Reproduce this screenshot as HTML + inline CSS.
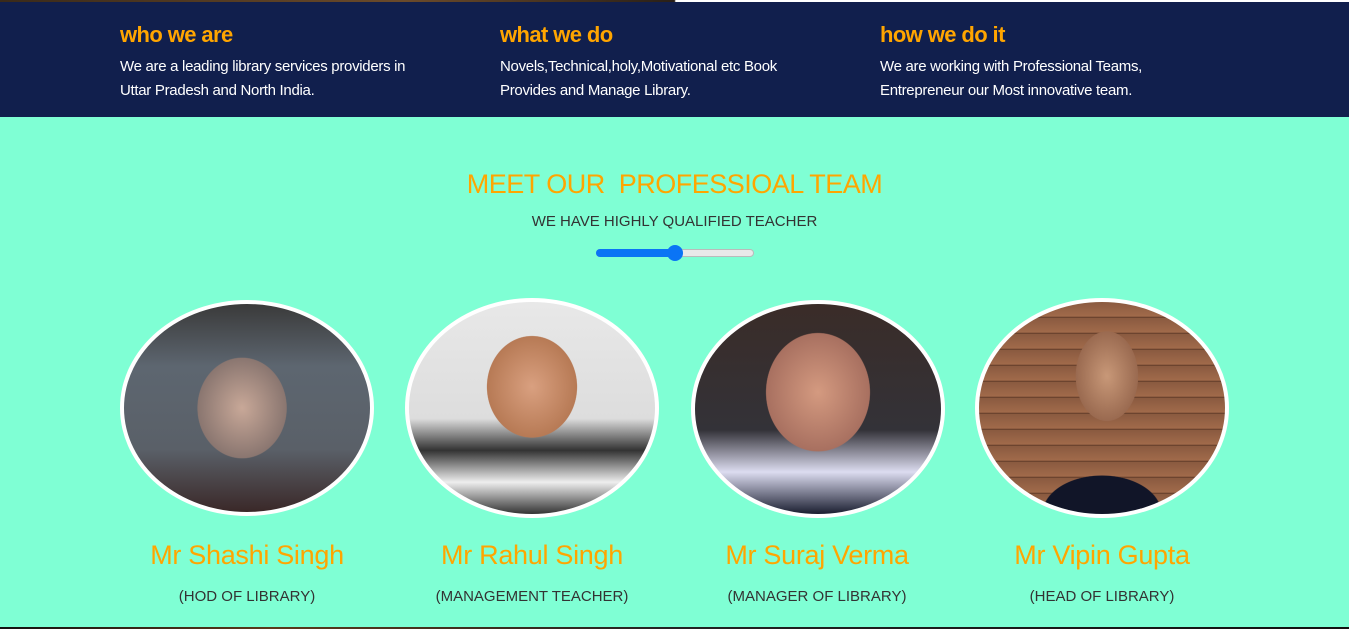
<!DOCTYPE html>
<html><head><meta charset="utf-8"><style>
*{margin:0;padding:0;box-sizing:border-box}
body{width:1349px;height:629px;overflow:hidden;background:#7fffd4;font-family:"Liberation Sans",sans-serif;position:relative}
.top{position:absolute;left:0;top:0;width:1349px;height:2px;background:linear-gradient(90deg,#3a2a1a,#6b4a2a 30%,#2a2018 50%,#fff 50.1%)}
.nav{position:absolute;left:0;top:2px;width:1349px;height:115px;background:#111f4d}
.col{position:absolute;top:18px;color:#fff}
.col h3{color:#ffa500;font-size:22px;font-weight:bold;height:30px;line-height:30px;letter-spacing:-0.6px}
.col p{font-size:15px;line-height:24px;margin-top:5px;letter-spacing:-0.3px}
.t{position:absolute;left:0;width:1349px;text-align:center}
.ph{position:absolute;width:254px;border:4px solid #fff;border-radius:50%;overflow:hidden}
.nm{position:absolute;width:300px;text-align:center;color:#ffa500;font-size:27px;top:540px;letter-spacing:-0.3px}
.rl{position:absolute;width:300px;text-align:center;color:#333;font-size:15px;top:588px}
.bot{position:absolute;left:0;top:627px;width:1349px;height:2px;background:linear-gradient(90deg,#111,#5a3a1a 20%,#222 50%,#111)}
</style></head><body>
<div class="top"></div>
<div class="nav">
<div class="col" style="left:120px"><h3>who we are</h3><p>We are a leading library services providers in<br>Uttar Pradesh and North India.</p></div>
<div class="col" style="left:500px"><h3>what we do</h3><p>Novels,Technical,holy,Motivational etc Book<br>Provides and Manage Library.</p></div>
<div class="col" style="left:880px"><h3>how we do it</h3><p>We are working with Professional Teams,<br>Entrepreneur our Most innovative team.</p></div>
</div>
<div class="t" style="top:169px;color:#ffa500;font-size:27px;letter-spacing:-0.5px">MEET OUR&nbsp; PROFESSIOAL TEAM</div>
<div class="t" style="top:213px;color:#333;font-size:15px">WE HAVE HIGHLY QUALIFIED TEACHER</div>
<div style="position:absolute;left:596px;top:249px;width:158px;height:8px;border-radius:4px;background:#e9e9e9;border:1px solid #bbb"></div>
<div style="position:absolute;left:596px;top:249px;width:80px;height:8px;border-radius:4px;background:#0a74f5"></div>
<div style="position:absolute;left:667px;top:245px;width:16px;height:16px;border-radius:50%;background:#0a74f5"></div>

<div class="ph" style="left:120px;top:300px;height:216px;background:radial-gradient(ellipse 30% 40% at 48% 50%,#c8a898,#8a7670 60%,transparent 61%),linear-gradient(180deg,#3a3a3a 0%,#5d6670 30%,#5a6068 70%,#3a2828 100%)"></div>
<div class="ph" style="left:405px;top:298px;height:220px;background:radial-gradient(ellipse 26% 34% at 50% 40%,#d9a080,#b77a55 70%,transparent 71%),linear-gradient(180deg,#e8e8e8 0%,#ddd 55%,#333 70%,#eee 85%,#333 100%)"></div>
<div class="ph" style="left:691px;top:300px;height:218px;background:radial-gradient(ellipse 30% 40% at 50% 42%,#d49a80,#a87060 70%,transparent 71%),linear-gradient(180deg,#3a2c28 0%,#333238 60%,#dcdcf0 80%,#1a1e30 100%)"></div>
<div class="ph" style="left:975px;top:298px;height:220px;background:radial-gradient(ellipse 18% 30% at 52% 35%,#c89878,#9a6a50 70%,transparent 71%),radial-gradient(ellipse 40% 30% at 50% 100%,#111528 60%,transparent 61%),repeating-linear-gradient(180deg,#8a5a40 0,#a06a4a 14px,#5a3826 16px)"></div>

<div class="nm" style="left:97px">Mr Shashi Singh</div>
<div class="nm" style="left:382px">Mr Rahul Singh</div>
<div class="nm" style="left:667px">Mr Suraj Verma</div>
<div class="nm" style="left:952px">Mr Vipin Gupta</div>
<div class="rl" style="left:97px">(HOD OF LIBRARY)</div>
<div class="rl" style="left:382px">(MANAGEMENT TEACHER)</div>
<div class="rl" style="left:667px">(MANAGER OF LIBRARY)</div>
<div class="rl" style="left:952px">(HEAD OF LIBRARY)</div>
<div class="bot"></div>
</body></html>
